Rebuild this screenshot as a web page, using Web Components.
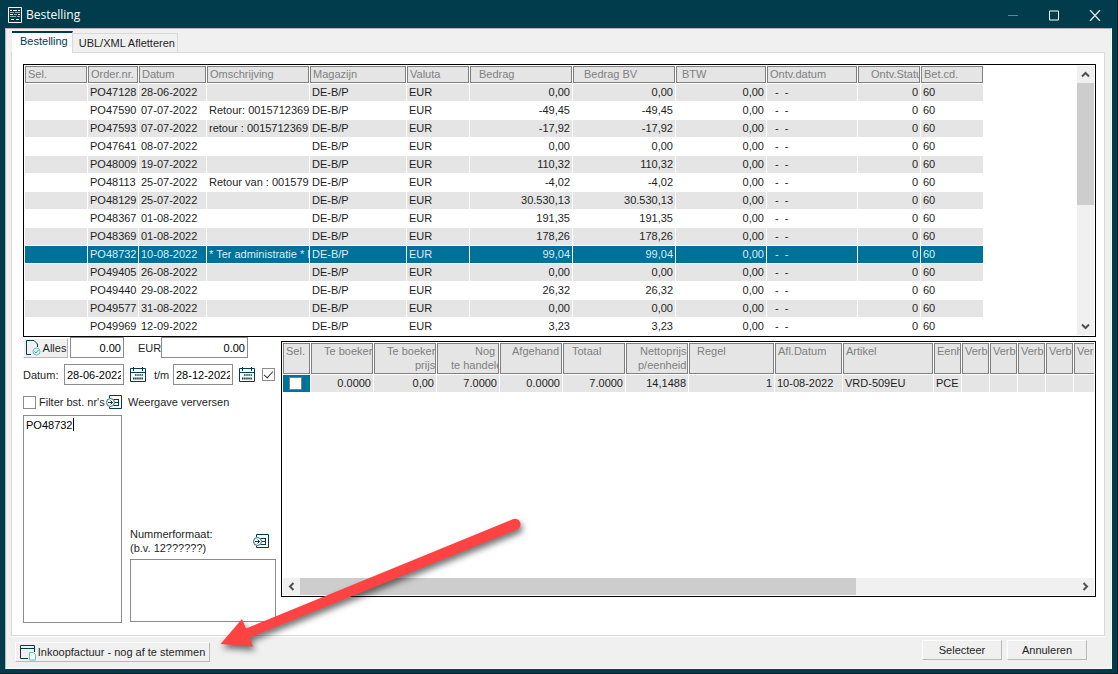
<!DOCTYPE html>
<html lang="nl">
<head>
<meta charset="utf-8">
<title>Bestelling</title>
<style>
  html,body{height:100%}
  body{
    margin:0; background:#003c4b; color:#1e1e1e;
    font:11px/14px "Liberation Sans",Arial,sans-serif;
    --line:#d9d9d9; --face:#f0f0f0; --dark:#003c4b; --teal:#5cc4bf;
    --cell:#e5e5e5; --grey:#808080; --sel:#007299;
  }
</style>
</head>
<body>
<app-window caption="Bestelling">
  <tab-panel>
    <order-grid slot="top"></order-grid>
    <filter-panel slot="side"></filter-panel>
    <line-grid slot="main"></line-grid>
  </tab-panel>
  <window-footer></window-footer>
  <pointer-arrow slot="over"></pointer-arrow>
</app-window>

<script>
// ---- icons ----
const ICONS = {
  doc:{w:14,h:16,body:`<path d="M.5.5h13v15H.5z" fill="none" stroke="#fff"/>
    <path d="M2 3.5h2M5 3.5h4M10 3.5h2M2 7.5h3M10 7.5h2M3 12.5h3M8 12.5h3" stroke="#fff"/>
    <path d="M2 5.5h4M7 5.5h5M6 7.5h3M2 9.5h6M9 9.5h3" stroke="#8fb0b8"/>`},
  docCheck:{w:16,h:16,body:`<path d="M6 14.500H1.500V.5H9l3.500 3.500V7" fill="none" stroke="#003c4b"/>
    <circle cx="11.500" cy="11.500" r="3.500" fill="#e2f5f3" stroke="#5cc4bf"/>
    <path d="M9.500 11.500l1.500 1.500 2.500-3" fill="none" stroke="#3ba9a4"/>`},
  cal:{w:16,h:16,body:`<path d="M.5 1.500h15v13H.5zM.5 5.500h15" fill="none" stroke="#003c4b"/>
    <path d="M3.500 0v4M12.500 0v4" stroke="#003c4b"/>
    <path d="M5 8h8" stroke="#003c4b" stroke-width="1.500" stroke-dasharray="1.500 .7"/>
    <path d="M3 11.500h10" stroke="#003c4b" stroke-width="2" stroke-dasharray="1.500 .6"/>`},
  into:{w:16,h:15,body:`<path d="M3.500 3V.5h12v13h-12V12" fill="none" stroke="#003c4b"/>
    <path d="M8 4.500h5M9 7.500h4M8 10.500h5M12.500 4v7" fill="none" stroke="#003c4b"/>
    <circle cx="4.500" cy="7.500" r="4" fill="#fff" stroke="#31616d"/>
    <path d="M2 7.500h4.500M4.500 5.500l2 2-2 2" fill="none" stroke="#003c4b"/>`},
  form:{w:16,h:17,body:`<path d="M8 14.500H.5V1.500h14V8M.5 4.500h14" fill="none" stroke="#003c4b"/>
    <path d="M9.500 8.500h4l2 2v5.500h-6z" fill="#f4fbfb" stroke="#5cc4bf"/>`},
  min:{w:10,h:11,body:`<path d="M0 5.500h10" stroke="#5f8791"/>`},
  max:{w:10,h:11,body:`<path d="M.5 1h9v9h-9z" fill="none" stroke="#fff"/>`},
  close:{w:12,h:11,body:`<path d="M1 0l10 11M11 0L1 11" fill="none" stroke="#dfe7e9" stroke-width="1.300"/>`},
  up:{w:9,h:7,body:`<path d="M1 5.500l3.500-3.500 3.500 3.500" fill="none" stroke="#505050" stroke-width="2"/>`},
  down:{w:9,h:7,body:`<path d="M1 1.500L4.500 5 8 1.500" fill="none" stroke="#505050" stroke-width="2"/>`},
  left:{w:7,h:9,body:`<path d="M5.500 1L2 4.500 5.500 8" fill="none" stroke="#505050" stroke-width="2"/>`},
  right:{w:7,h:9,body:`<path d="M1.500 1L5 4.500 1.500 8" fill="none" stroke="#505050" stroke-width="2"/>`},
};
const icon = n => `<svg class="ico" width="${ICONS[n].w}" height="${ICONS[n].h}" viewBox="0 0 ${ICONS[n].w} ${ICONS[n].h}" aria-hidden="true">${ICONS[n].body}</svg>`;

// shared by every shadow root
const BASE = `
  *{box-sizing:border-box}
  button,input,textarea{font:inherit;color:inherit;margin:0;border-radius:0;outline:0}
  button{padding:0;border:0;background:none}
  .ico{display:block;flex:none}
`;
const BTN = `
  .btn{
    display:inline-flex; align-items:center; justify-content:center; height:20px;
    background:var(--face); border:1px solid; border-color:#fff #b8b8b8 #b8b8b8 #fff;
  }
`;

class Base extends HTMLElement{
  constructor(){
    super();
    this.attachShadow({mode:'open'});
  }
  connectedCallback(){
    this.shadowRoot.innerHTML = `<style>${BASE}${this.css()}</style>${this.html()}`;
  }
}

customElements.define('app-window', class extends Base{
  css(){ return `
    :host{
      display:flex; flex-direction:column; box-sizing:border-box; min-height:100vh; position:relative;
      background:var(--dark); border:solid #001a22; border-width:0 1px 1px 0;
    }
    header{display:flex;align-items:center;height:28px;padding:0 2px 0 8px;color:#fff}
    h1{flex:1;margin:2px 0 0 4px;font:12px/16px "Open Sans","Noto Sans",sans-serif}
    header .ico{margin-top:2px}
    header button{display:flex;align-items:center;justify-content:center;width:41px;height:26px}
    main{
      flex:1; display:flex; flex-direction:column; margin:0 5px 4px; padding:2px 6px 0 5px;
      background:var(--face); border:1px solid; border-color:#b4b4b4 #fff #fff #b4b4b4;
    }
  `; }
  html(){ return `
    <header>
      ${icon('doc')}<h1>${this.getAttribute('caption')}</h1>
      <button aria-label="Minimaliseren">${icon('min')}</button>
      <button aria-label="Maximaliseren">${icon('max')}</button>
      <button aria-label="Sluiten">${icon('close')}</button>
    </header>
    <main><slot></slot></main>
    <slot name="over"></slot>
  `; }
});

customElements.define('tab-panel', class extends Base{
  css(){ return `
    :host{flex:1;display:flex;flex-direction:column}
    nav{display:flex;align-items:flex-end;padding-left:1px}
    nav button{height:19px;padding:0 2px 0 6px;border:1px solid var(--line);border-width:1px 1px 0 0}
    nav .on{
      height:22px; padding:0 4px 4px 8px; margin-bottom:-1px; position:relative;
      background:#fff; color:var(--dark); border-top:2px solid var(--dark);
    }
    section{
      flex:1; display:grid; grid-template:auto 1fr / 258px minmax(0,1fr);
      padding:11px 8px 12px 11px; background:#fff; border:1px solid var(--line);
      box-shadow:0 1px #fff;
    }
    .top{grid-column:1 / -1}
    .side{display:flex}
    .main{display:flex;padding:4px 0 26px}
  `; }
  html(){ return `
    <nav role="tablist">
      <button class="on" role="tab" aria-selected="true">Bestelling</button>
      <button role="tab" aria-selected="false">UBL/XML Afletteren</button>
    </nav>
    <section>
      <div class="top"><slot name="top"></slot></div>
      <div class="side"><slot name="side"></slot></div>
      <div class="main"><slot name="main"></slot></div>
    </section>
  `; }
});

// scroll-bar: direction by attribute "dir-x", thumb as css custom property
customElements.define('scroll-bar', class extends Base{
  css(){ return `
    :host{display:flex;flex-direction:column;background:var(--face)}
    :host([dir-x]){flex-direction:row}
    button{flex:none;display:flex;align-items:center;justify-content:center;width:17px;height:17px}
    .track{flex:1;display:flex;flex-direction:inherit}
    .thumb{flex:0 0 var(--thumb,50%);background:#cdcdcd}
  `; }
  html(){
    const x=this.hasAttribute('dir-x');
    return `
      <button aria-label="${x?'Naar links':'Omhoog'}">${icon(x?'left':'up')}</button>
      <div class="track"><div class="thumb"></div></div>
      <button aria-label="${x?'Naar rechts':'Omlaag'}">${icon(x?'right':'down')}</button>
    `;
  }
});

const GRID = `
  .view{flex:1;overflow:hidden;min-width:0}
  table{table-layout:fixed;width:0;border-collapse:separate;border-spacing:1px}
  th,td{padding:0;overflow:hidden;white-space:pre;text-align:left;font-weight:normal}
  th{background:var(--cell);border:1px solid var(--grey);color:var(--grey);vertical-align:top}
  th span{display:block;overflow:hidden}
  td{height:17px;line-height:17px;padding:0 2px}
  tr:nth-child(odd) td{background:var(--cell)}
  .num{text-align:right}
  .date{padding-left:8px}
`;
// column: [width, [line, indent], ...]
const head = cols => `
  <colgroup>${cols.map(c=>`<col style="width:${c[0]}px">`).join('')}</colgroup>
  <thead><tr>${cols.map(([,...lines])=>`<th scope="col">${
    lines.map(([t,pad])=>`<span style="padding-left:${pad}px">${t}</span>`).join('')
  }</th>`).join('')}</tr></thead>`;

const ORDER_COLS = [
  [62,['Sel.',2]], [50,['Order.nr.',2]], [67,['Datum',2]], [102,['Omschrijving',2]],
  [96,['Magazijn',2]], [62,['Valuta',2]], [102,['Bedrag',8]], [102,['Bedrag BV',10]],
  [90,['BTW',5]], [90,['Ontv.datum',2]], [62,['Ontv.Statu',12]], [62,['Bet.cd.',2]],
];
const ORDERS = [
  ['PO47128','28-06-2022','','0,00'],
  ['PO47590','07-07-2022','Retour: 0015712369','-49,45'],
  ['PO47593','07-07-2022','retour : 0015712369','-17,92'],
  ['PO47641','08-07-2022','','0,00'],
  ['PO48009','19-07-2022','','110,32'],
  ['PO48113','25-07-2022','Retour van : 001579','-4,02'],
  ['PO48129','25-07-2022','','30.530,13'],
  ['PO48367','01-08-2022','','191,35'],
  ['PO48369','01-08-2022','','178,26'],
  ['PO48732','10-08-2022','* Ter administratie * H','99,04'],
  ['PO49405','26-08-2022','','0,00'],
  ['PO49440','29-08-2022','','26,32'],
  ['PO49577','31-08-2022','','0,00'],
  ['PO49969','12-09-2022','','3,23'],
];

customElements.define('order-grid', class extends Base{
  css(){ return `${GRID}
    :host{display:flex;border:1px solid #000}
    th{height:17px;line-height:15px}
    tbody tr.sel td{background:var(--sel);color:#d9edf4}
    scroll-bar{margin:1px 1px 1px 0;--thumb:52%}
  `; }
  html(){ return `
    <div class="view"><table>${head(ORDER_COLS)}<tbody>
      ${ORDERS.map(([nr,date,desc,sum])=>`<tr${nr==='PO48732'?' class="sel"':''}>
        <td></td><td>${nr}</td><td>${date}</td><td>${desc}</td><td>DE-B/P</td><td>EUR</td>
        <td class="num">${sum}</td><td class="num">${sum}</td><td class="num">0,00</td>
        <td class="date">-  -</td><td class="num">0</td><td>60</td></tr>`).join('')}
    </tbody></table></div>
    <scroll-bar></scroll-bar>
  `; }
});

const LINE_COLS = [
  [27,['Sel.',2]], [62,['Te boeken',12]], [62,['Te boeken',12],['prijs',40]],
  [62,['Nog',37],['te handelen',13]], [62,['Afgehand',11]], [62,['Totaal',8]],
  [62,['Nettoprijs',13],['p/eenheid',11]], [85,['Regel',7]], [67,['Afl.Datum',2]], [90,['Artikel',2]],
  [27,['Eenh',2]], [27,['Verb',2]], [27,['Verb',2]], [27,['Verb',2]], [27,['Verb',2]], [27,['Verb',2]],
];

customElements.define('line-grid', class extends Base{
  css(){ return `${GRID}
    :host{flex:1;min-width:0;display:flex;flex-direction:column;border:1px solid #000}
    .view{margin-right:1px}
    th{height:31px;line-height:14px}
    tbody td.pick{background:var(--sel);padding:0}
    .pick input{
      display:block; appearance:none; width:13px; height:13px; margin:0 0 0 6px;
      background:#fff; border:1px solid var(--grey);
    }
    scroll-bar{margin:0 1px 1px;--thumb:71.5%}
  `; }
  html(){ return `
    <div class="view"><table>${head(LINE_COLS)}<tbody><tr>
      <td class="pick"><input type="checkbox" aria-label="Selecteer regel 1"></td>
      <td class="num">0.0000</td><td class="num">0,00</td><td class="num">7.0000</td>
      <td class="num">0.0000</td><td class="num">7.0000</td><td class="num">14,1488</td>
      <td class="num">1</td><td>10-08-2022</td><td>VRD-509EU</td><td>PCE</td>
      <td></td><td></td><td></td><td></td><td></td></tr></tbody></table></div>
    <scroll-bar dir-x></scroll-bar>
  `; }
});

customElements.define('filter-panel', class extends Base{
  css(){ return `${BTN}
    :host{flex:1;display:flex;flex-direction:column}
    .row{display:flex;align-items:center;height:21px}
    .dates{margin-top:6px}
    .filter{height:18px;margin:8px 0 4px}
    input,textarea{display:block;background:#fff;border:1px solid #8c8c8c;color:#000}
    input{height:21px;padding:0 2px}
    .date{width:60px}
    .amount{text-align:right}
    .check{
      appearance:none; flex:none; width:13px; height:13px; padding:0;
      display:grid; place-items:center;
    }
    .check:checked::before{
      content:""; width:4px; height:8px; margin-top:-3px;
      border:solid #333; border-width:0 1px 1px 0; transform:rotate(42deg);
    }
    textarea{resize:none;padding:2px;line-height:14px}
    .lists{flex:1;display:grid;grid-template-columns:99px 146px;gap:8px}
    .nrs{position:relative;display:grid}
    .nrs textarea{height:100%}
    .caret{position:absolute;left:50px;top:3px;width:1px;height:13px;background:#000}
    .format{display:flex;flex-direction:column;justify-content:flex-end;padding-bottom:1px}
    .format div{display:flex;align-items:center;justify-content:space-between;padding:0 7px 4px 0}
    .format textarea{height:63px}
  `; }
  html(){ return `
    <div class="row">
      <button class="btn" style="width:45px;gap:2px">${icon('docCheck')}Alles</button>
      <input class="amount" style="width:54px;margin:0 14px 0 2px" aria-label="Totaal" value="0.00">
      <label for="eur" style="width:23px">EUR</label>
      <input class="amount" id="eur" style="width:87px" value="0.00">
    </div>
    <div class="row dates">
      <label for="van" style="width:41px">Datum:</label>
      <input class="date" id="van" value="28-06-2022">
      <button style="margin:0 8px 0 6px" aria-label="Kies begindatum">${icon('cal')}</button>
      <label for="tot" style="width:19px">t/m</label>
      <input class="date" id="tot" value="28-12-2022">
      <button style="margin:0 7px 0 6px" aria-label="Kies einddatum">${icon('cal')}</button>
      <input class="check" type="checkbox" aria-label="Datumfilter actief" checked>
    </div>
    <div class="row filter">
      <input class="check" id="flt" type="checkbox">
      <label for="flt" style="width:67px;margin-left:3px;white-space:nowrap">Filter bst. nr's</label>
      <button style="display:flex;gap:6px;align-items:center">${icon('into')}Weergave verversen</button>
    </div>
    <div class="lists">
      <div class="nrs">
        <textarea aria-label="Bestelnummers" spellcheck="false">PO48732</textarea>
        <span class="caret"></span>
      </div>
      <div class="format">
        <div>
          <label for="fmt">Nummerformaat:<br>(b.v. 12??????)</label>
          <button aria-label="Nummerformaat toepassen">${icon('into')}</button>
        </div>
        <textarea id="fmt"></textarea>
      </div>
    </div>
  `; }
});

customElements.define('window-footer', class extends Base{
  css(){ return `${BTN}
    :host{display:flex;justify-content:space-between;height:32px;box-sizing:border-box;padding:4px 18px 6px 4px}
    .left{align-self:flex-end;width:195px;gap:2px}
    .right{display:flex;gap:5px}
    .right .btn{width:80px}
  `; }
  html(){ return `
    <button class="btn left">${icon('form')}Inkoopfactuur - nog af te stemmen</button>
    <div class="right">
      <button class="btn">Selecteer</button>
      <button class="btn">Annuleren</button>
    </div>
  `; }
});

// red arrow that points at the footer button
customElements.define('pointer-arrow', class extends Base{
  css(){ return `
    :host{position:absolute;left:212px;bottom:13px;pointer-events:none}
    svg{display:block;filter:drop-shadow(2px 4px 3px rgba(0,0,0,.55))}
  `; }
  html(){ return `
    <svg width="320" height="150" viewBox="212 510 320 150" aria-hidden="true">
      <path d="M220.500 644L242 619l4 9.500L513.500 519a5.500 5.500 0 0 1 4 10.200L249.500 637.500l3.500 9z" fill="#ff4242"/>
    </svg>
  `; }
});
</script>
</body>
</html>
